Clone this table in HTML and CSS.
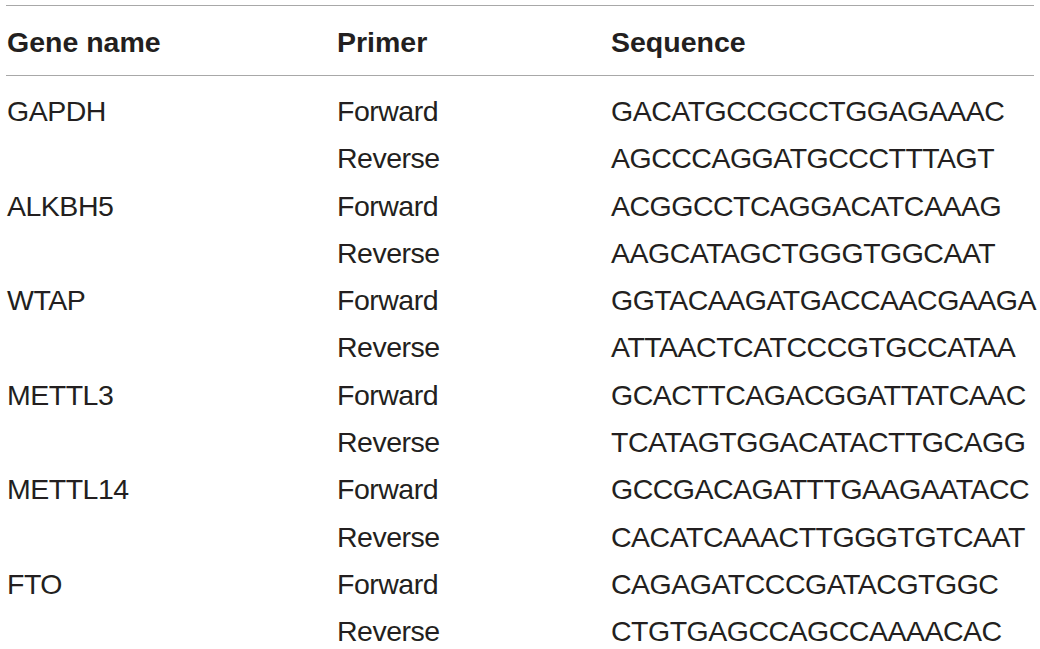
FILE: index.html
```html
<!DOCTYPE html>
<html>
<head>
<meta charset="utf-8">
<link rel="stylesheet" href="styles.css">
</head>
<body>
<div class="table">
  <div class="row head">
    <div class="c1">Gene name</div>
    <div class="c2">Primer</div>
    <div class="c3">Sequence</div>
  </div>
  <div class="body">
    <div class="row"><div class="c1">GAPDH</div><div class="c2">Forward</div><div class="c3">GACATGCCGCCTGGAGAAAC</div></div>
    <div class="row"><div class="c1"></div><div class="c2">Reverse</div><div class="c3">AGCCCAGGATGCCCTTTAGT</div></div>
    <div class="row"><div class="c1">ALKBH5</div><div class="c2">Forward</div><div class="c3">ACGGCCTCAGGACATCAAAG</div></div>
    <div class="row"><div class="c1"></div><div class="c2">Reverse</div><div class="c3">AAGCATAGCTGGGTGGCAAT</div></div>
    <div class="row"><div class="c1">WTAP</div><div class="c2">Forward</div><div class="c3">GGTACAAGATGACCAACGAAGA</div></div>
    <div class="row"><div class="c1"></div><div class="c2">Reverse</div><div class="c3">ATTAACTCATCCCGTGCCATAA</div></div>
    <div class="row"><div class="c1">METTL3</div><div class="c2">Forward</div><div class="c3">GCACTTCAGACGGATTATCAAC</div></div>
    <div class="row"><div class="c1"></div><div class="c2">Reverse</div><div class="c3">TCATAGTGGACATACTTGCAGG</div></div>
    <div class="row"><div class="c1">METTL14</div><div class="c2">Forward</div><div class="c3">GCCGACAGATTTGAAGAATACC</div></div>
    <div class="row"><div class="c1"></div><div class="c2">Reverse</div><div class="c3">CACATCAAACTTGGGTGTCAAT</div></div>
    <div class="row"><div class="c1">FTO</div><div class="c2">Forward</div><div class="c3">CAGAGATCCCGATACGTGGC</div></div>
    <div class="row"><div class="c1"></div><div class="c2">Reverse</div><div class="c3">CTGTGAGCCAGCCAAAACAC</div></div>
  </div>
</div>
</body>
</html>
```

FILE: styles.css
```css
html, body {
  margin: 0;
  padding: 0;
  background: #ffffff;
}
body {
  padding-top: 5px;
  font-family: "Liberation Sans", Arial, sans-serif;
  color: #231f20;
}
.table {
  margin-left: 6px;
  width: 1028px;
  border-top: 1.5px solid #a8a8a8;
}
.row {
  display: grid;
  grid-template-columns: 330px 274px 1fr;
  font-size: 28.5px;
  letter-spacing: -0.5px;
  line-height: 47.3px;
  white-space: nowrap;
}
.row > div {
  padding-left: 1px;
}
.head {
  font-weight: bold;
  letter-spacing: 0;
  height: 70px;
  line-height: 70px;
  padding-top: 1px;
  box-sizing: border-box;
  border-bottom: 1.5px solid #a8a8a8;
}
.body {
  padding-top: 12px;
}
```
